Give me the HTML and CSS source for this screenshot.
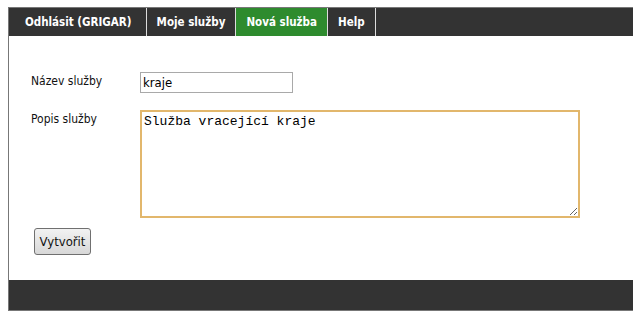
FILE: index.html
```html
<!DOCTYPE html>
<html lang="cs">
<head>
  <meta charset="UTF-8" />
  <title>Nová služba</title>
  <link rel="stylesheet" href="styles.css">
</head>
<body>
  <div class="page">
    <ul class="menu">
      <li class="first"><a href="#">Odhlásit (GRIGAR)</a></li>
      <li><a href="#">Moje služby</a></li>
      <li class="active"><a href="#">Nová služba</a></li>
      <li><a href="#">Help</a></li>
    </ul>

    <form class="content">
      <div class="row">
        <label for="nazev">Název služby</label>
        <input type="text" id="nazev" value="kraje">
      </div>
      <div class="row">
        <label for="popis">Popis služby</label>
        <textarea id="popis">Služba vracející kraje</textarea>
      </div>
      <button type="button" class="btn">Vytvořit</button>
    </form>

    <div class="footer"></div>
  </div>
</body>
</html>
```

FILE: styles.css
```css
body {
  margin: 7px 0 0 8px;
  font-family: 'DejaVu Sans Condensed', 'DejaVu Sans', sans-serif;
  font-size: 12px;
  color: #222;
  background: #fff;
}

.page {
  border: 1px solid #777;
  border-right: none;
}

.menu {
  list-style: none;
  margin: 0;
  padding: 0;
  height: 28px;
  background: #333;
  display: flex;
}

.menu li {
  border-right: 1px solid #ddd;
}

.menu a {
  display: block;
  height: 28px;
  line-height: 28px;
  padding: 0 10px;
  color: #fff;
  font-size: 11.5px;
  font-weight: bold;
  text-decoration: none;
}

.menu li.first a {
  padding: 0 14px 0 16px;
}

.menu li.active a {
  background: #2e8b2e;
}

.content {
  padding: 36px 0 25px 22px;
}

.row {
  display: flex;
  align-items: flex-start;
  margin-bottom: 17px;
}

.row:nth-child(2) {
  margin-bottom: 10px;
}

.row label {
  width: 109px;
  padding-top: 2px;
  color: #111;
}

.row input {
  width: 153px;
  height: 21px;
  box-sizing: border-box;
  border: 1px solid #a9a9a9;
  padding: 1px 2px;
  font-family: 'DejaVu Sans Condensed', sans-serif;
  font-size: 13px;
  color: #000;
  margin: 0;
}

.row textarea {
  width: 440px;
  height: 108px;
  box-sizing: border-box;
  border: 2px solid #e2b76c;
  padding: 2px 2px;
  font-family: 'Courier New', 'Nimbus Mono PS', 'FreeMono', 'Liberation Mono', monospace;
  font-size: 13px;
  color: #000;
  margin: 0;
  outline: none;
}

.btn {
  margin-left: 3px;
  width: 57px;
  height: 27px;
  border: 1px solid #707070;
  border-radius: 3px;
  background: linear-gradient(#f2f2f2, #d8d8d8);
  font-family: 'DejaVu Sans Condensed', sans-serif;
  font-size: 13px;
  color: #111;
  padding: 0;
}

.footer {
  height: 30px;
  background: #333;
}
```
